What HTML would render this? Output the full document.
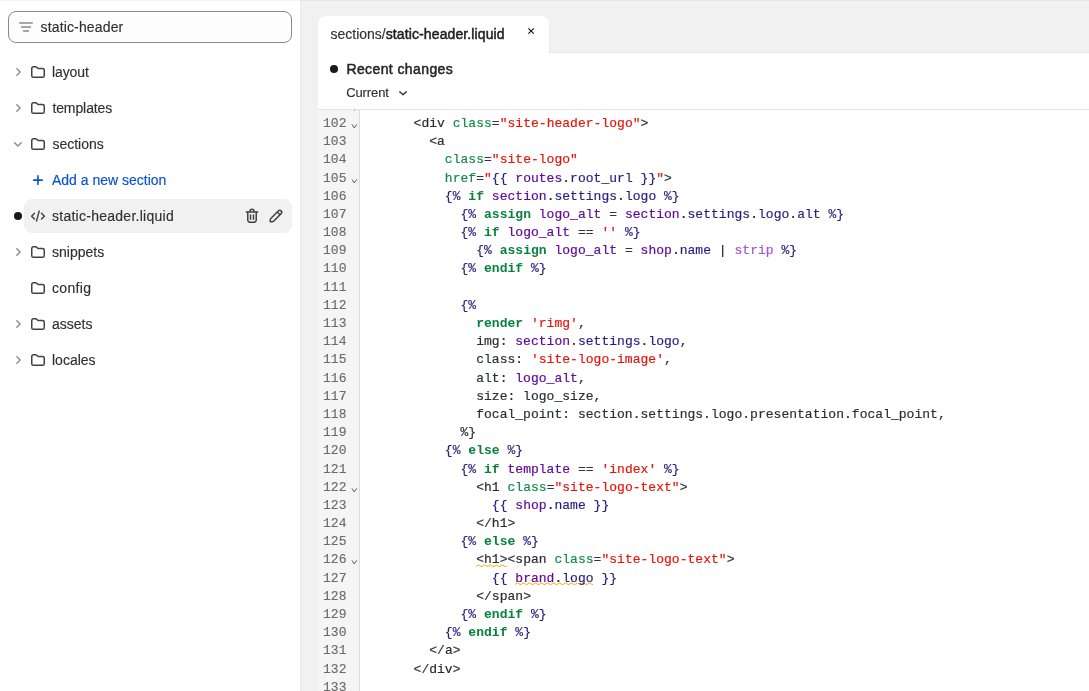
<!DOCTYPE html>
<html>
<head>
<meta charset="utf-8">
<title>Edit code</title>
<style>
html,body{margin:0;padding:0;}
body{will-change:transform;width:1089px;height:691px;overflow:hidden;position:relative;background:#f1f1f1;font-family:"Liberation Sans",sans-serif;color:#303030;}
*{box-sizing:border-box;}
.abs{position:absolute;}
#topline{left:0;top:0;width:1089px;height:1px;background:linear-gradient(to right,#f4f4f4 0,#f4f4f4 300px,#e5e5e5 300px);z-index:5;}
#vline{left:300px;top:0;width:1px;height:691px;background:#ebebeb;}
#side{left:0;top:0;width:300px;height:691px;background:#fff;}
#search{left:8px;top:11px;width:284px;height:32px;border:1px solid #8a8a8a;border-radius:8px;background:#fdfdfd;}
.t{position:absolute;white-space:nowrap;font-size:14px;line-height:20px;color:#303030;-webkit-text-stroke:0.15px;}
.t b,.nb{-webkit-text-stroke:0;}
.row{left:52px;}
svg{position:absolute;overflow:visible;}
#sel{left:24px;top:199px;width:268px;height:34px;border-radius:8px;background:#f1f1f1;}
.dot{width:8px;height:8px;border-radius:50%;background:#1a1a1a;}
#tab{left:318px;top:16px;width:231px;height:40px;background:#fff;border-radius:8px 8px 0 0;}
#tabr{left:549px;top:24px;width:1px;height:29px;background:#ebebeb;}
#tabb{left:549px;top:52px;width:540px;height:1px;background:#ebebeb;}
#panel{left:318px;top:53px;width:771px;height:638px;background:#fff;}
#sep{left:318px;top:109px;width:771px;height:1px;background:#e3e3e3;}
#gutter{left:318px;top:110px;width:42px;height:581px;background:#f5f5f5;border-right:1px solid #ddd;}
pre{margin:0;position:absolute;font-family:"Liberation Mono",monospace;font-size:13px;line-height:18.1875px;white-space:pre;}
#nums{-webkit-text-stroke:0.15px;left:318px;top:114.9375px;width:31.5px;text-align:right;padding-right:3px;color:#6c6c6c;letter-spacing:0.02px;}
#code{-webkit-text-stroke:0.18px;left:366.6px;top:114.9375px;color:#2a2e35;letter-spacing:0.025px;}
.b{color:#2c3845;}
.n{color:#2a2a2a;}
.a{color:#148a47;}
.s{color:#e8140a;}
.l{color:#271f80;}
.k{color:#07823e;font-weight:bold;-webkit-text-stroke:0;}
.v{color:#620b99;}
.p{color:#271f80;}
.d{color:#222;}
.f{color:#a453d6;}
</style>
</head>
<body>
<div id="side" class="abs">
  <div id="search" class="abs"></div>
  <svg style="left:16px;top:17px" width="20" height="20" viewBox="0 0 20 20" fill="#8a8a8a"><path d="M3 6a.75.75 0 0 1 .75-.75h12.5a.75.75 0 0 1 0 1.5h-12.5a.75.75 0 0 1-.75-.75Z"/><path d="M6.75 14a.75.75 0 0 1 .75-.75h5a.75.75 0 0 1 0 1.5h-5a.75.75 0 0 1-.75-.75Z"/><path d="M5.5 9.25a.75.75 0 0 0 0 1.5h9a.75.75 0 0 0 0-1.5h-9Z"/></svg>
  <div class="t" style="left:40.5px;top:17px;letter-spacing:0.15px;">static-header</div>

  <div id="sel" class="abs"></div>

  <!-- chevrons -->
  <svg class="chev" style="left:10px;top:64px" width="16" height="16" viewBox="0 0 16 16"><path d="M6.8 4.7 L10.1 8 L6.8 11.3" fill="none" stroke="#8a8a8a" stroke-width="1.4" stroke-linecap="round" stroke-linejoin="round"/></svg>
  <svg class="chev" style="left:10px;top:100px" width="16" height="16" viewBox="0 0 16 16"><path d="M6.8 4.7 L10.1 8 L6.8 11.3" fill="none" stroke="#8a8a8a" stroke-width="1.4" stroke-linecap="round" stroke-linejoin="round"/></svg>
  <svg class="chev" style="left:10px;top:136px" width="16" height="16" viewBox="0 0 16 16"><path d="M4.6 6.7 L7.9 10 L11.2 6.7" fill="none" stroke="#8a8a8a" stroke-width="1.4" stroke-linecap="round" stroke-linejoin="round"/></svg>
  <svg class="chev" style="left:10px;top:244px" width="16" height="16" viewBox="0 0 16 16"><path d="M6.8 4.7 L10.1 8 L6.8 11.3" fill="none" stroke="#8a8a8a" stroke-width="1.4" stroke-linecap="round" stroke-linejoin="round"/></svg>
  <svg class="chev" style="left:10px;top:316px" width="16" height="16" viewBox="0 0 16 16"><path d="M6.8 4.7 L10.1 8 L6.8 11.3" fill="none" stroke="#8a8a8a" stroke-width="1.4" stroke-linecap="round" stroke-linejoin="round"/></svg>
  <svg class="chev" style="left:10px;top:352px" width="16" height="16" viewBox="0 0 16 16"><path d="M6.8 4.7 L10.1 8 L6.8 11.3" fill="none" stroke="#8a8a8a" stroke-width="1.4" stroke-linecap="round" stroke-linejoin="round"/></svg>

  <!-- folders -->
  <svg style="left:28px;top:62px" width="20" height="20" viewBox="0 0 20 20"><path d="M3.75 6.4a1.65 1.65 0 0 1 1.65-1.65h2.3a1.4 1.4 0 0 1 1 .41l1.05 1.05a.6.6 0 0 0 .42.17h4.43a1.65 1.65 0 0 1 1.65 1.65v5.6a1.65 1.65 0 0 1-1.65 1.65h-9.2a1.65 1.65 0 0 1-1.65-1.65Z" fill="none" stroke="#414141" stroke-width="1.5" stroke-linejoin="round"/></svg>
  <svg style="left:28px;top:98px" width="20" height="20" viewBox="0 0 20 20"><path d="M3.75 6.4a1.65 1.65 0 0 1 1.65-1.65h2.3a1.4 1.4 0 0 1 1 .41l1.05 1.05a.6.6 0 0 0 .42.17h4.43a1.65 1.65 0 0 1 1.65 1.65v5.6a1.65 1.65 0 0 1-1.65 1.65h-9.2a1.65 1.65 0 0 1-1.65-1.65Z" fill="none" stroke="#414141" stroke-width="1.5" stroke-linejoin="round"/></svg>
  <svg style="left:28px;top:134px" width="20" height="20" viewBox="0 0 20 20"><path d="M3.75 6.4a1.65 1.65 0 0 1 1.65-1.65h2.3a1.4 1.4 0 0 1 1 .41l1.05 1.05a.6.6 0 0 0 .42.17h4.43a1.65 1.65 0 0 1 1.65 1.65v5.6a1.65 1.65 0 0 1-1.65 1.65h-9.2a1.65 1.65 0 0 1-1.65-1.65Z" fill="none" stroke="#414141" stroke-width="1.5" stroke-linejoin="round"/></svg>
  <svg style="left:28px;top:242px" width="20" height="20" viewBox="0 0 20 20"><path d="M3.75 6.4a1.65 1.65 0 0 1 1.65-1.65h2.3a1.4 1.4 0 0 1 1 .41l1.05 1.05a.6.6 0 0 0 .42.17h4.43a1.65 1.65 0 0 1 1.65 1.65v5.6a1.65 1.65 0 0 1-1.65 1.65h-9.2a1.65 1.65 0 0 1-1.65-1.65Z" fill="none" stroke="#414141" stroke-width="1.5" stroke-linejoin="round"/></svg>
  <svg style="left:28px;top:278px" width="20" height="20" viewBox="0 0 20 20"><path d="M3.75 6.4a1.65 1.65 0 0 1 1.65-1.65h2.3a1.4 1.4 0 0 1 1 .41l1.05 1.05a.6.6 0 0 0 .42.17h4.43a1.65 1.65 0 0 1 1.65 1.65v5.6a1.65 1.65 0 0 1-1.65 1.65h-9.2a1.65 1.65 0 0 1-1.65-1.65Z" fill="none" stroke="#414141" stroke-width="1.5" stroke-linejoin="round"/></svg>
  <svg style="left:28px;top:314px" width="20" height="20" viewBox="0 0 20 20"><path d="M3.75 6.4a1.65 1.65 0 0 1 1.65-1.65h2.3a1.4 1.4 0 0 1 1 .41l1.05 1.05a.6.6 0 0 0 .42.17h4.43a1.65 1.65 0 0 1 1.65 1.65v5.6a1.65 1.65 0 0 1-1.65 1.65h-9.2a1.65 1.65 0 0 1-1.65-1.65Z" fill="none" stroke="#414141" stroke-width="1.5" stroke-linejoin="round"/></svg>
  <svg style="left:28px;top:350px" width="20" height="20" viewBox="0 0 20 20"><path d="M3.75 6.4a1.65 1.65 0 0 1 1.65-1.65h2.3a1.4 1.4 0 0 1 1 .41l1.05 1.05a.6.6 0 0 0 .42.17h4.43a1.65 1.65 0 0 1 1.65 1.65v5.6a1.65 1.65 0 0 1-1.65 1.65h-9.2a1.65 1.65 0 0 1-1.65-1.65Z" fill="none" stroke="#414141" stroke-width="1.5" stroke-linejoin="round"/></svg>

  <div class="t row" style="top:62px;letter-spacing:-0.1px;">layout</div>
  <div class="t row" style="top:98px;left:52.4px;letter-spacing:-0.1px;">templates</div>
  <div class="t row" style="top:134px;left:52.4px;">sections</div>
  <svg style="left:28px;top:170px" width="20" height="20" viewBox="0 0 20 20"><path d="M9.95 5.75v8.7M5.6 10.1h8.7" fill="none" stroke="#0b50d6" stroke-width="1.6" stroke-linecap="round"/></svg>
  <div class="t row" style="top:170px;color:#0b50d6;">Add a new section</div>

  <div class="dot abs" style="left:14px;top:212px;"></div>
  <svg style="left:28px;top:206px" width="20" height="20" viewBox="0 0 20 20"><path d="M6.5 7.3 L3.6 10.2 L6.5 13.1 M11.2 5 L8.5 15.1 M13.5 7.3 L16.4 10.2 L13.5 13.1" fill="none" stroke="#414141" stroke-width="1.4" stroke-linecap="round" stroke-linejoin="round"/></svg>
  <div class="t row" style="top:206px;letter-spacing:0.26px;">static-header.liquid</div>
  <svg style="left:242px;top:206px" width="20" height="20" viewBox="0 0 20 20" fill="#414141"><path d="M11.5 8.25a.75.75 0 0 1 .75.75v4.25a.75.75 0 0 1-1.5 0v-4.25a.75.75 0 0 1 .75-.75Z"/><path d="M9.25 9a.75.75 0 0 0-1.5 0v4.25a.75.75 0 0 0 1.5 0v-4.25Z"/><path fill-rule="evenodd" d="M7.25 5.25a2.75 2.75 0 0 1 5.5 0h3a.75.75 0 0 1 0 1.5h-.75v5.45c0 1.68 0 2.52-.327 3.162a3 3 0 0 1-1.311 1.311c-.642.327-1.482.327-3.162.327h-.4c-1.68 0-2.52 0-3.162-.327a3 3 0 0 1-1.311-1.311c-.327-.642-.327-1.482-.327-3.162v-5.45h-.75a.75.75 0 0 1 0-1.5h3Zm1.5 0a1.25 1.25 0 1 1 2.5 0h-2.5Zm-2.25 1.5h7v5.45c0 .865-.001 1.423-.036 1.848-.033.408-.09.559-.128.633a1.5 1.5 0 0 1-.655.655c-.074.038-.225.095-.633.128-.425.035-.983.036-1.848.036h-.4c-.865 0-1.423-.001-1.848-.036-.408-.033-.559-.09-.633-.128a1.5 1.5 0 0 1-.656-.655c-.037-.074-.094-.225-.127-.633-.035-.425-.036-.983-.036-1.848v-5.45Z"/></svg>
  <svg style="left:266px;top:206px" width="20" height="20" viewBox="0 0 20 20" fill="#414141"><path fill-rule="evenodd" d="M15.655 4.344a2.695 2.695 0 0 0-3.81 0l-.599.599-.009-.009-1.06 1.06.008.01-5.88 5.88a2.750 2.750 0 0 0-.805 1.944v1.922a.75.75 0 0 0 .75.75h1.922a2.750 2.750 0 0 0 1.944-.806l7.54-7.539a2.695 2.695 0 0 0 0-3.810Zm-4.409 2.720-5.880 5.880a1.250 1.250 0 0 0-.366.884v1.172h1.172c.331 0 .650-.132.883-.366l5.880-5.880-1.689-1.690Zm2.750.629.599-.599a1.195 1.195 0 1 0-1.690-1.689l-.598.599 1.690 1.689Z"/></svg>

  <div class="t row" style="top:242px;">snippets</div>
  <div class="t row" style="top:278px;letter-spacing:0.35px;">config</div>
  <div class="t row" style="top:314px;">assets</div>
  <div class="t row" style="top:350px;">locales</div>
</div>

<div id="tab" class="abs"></div>
<div id="panel" class="abs"></div>
<div id="tabr" class="abs"></div><div id="tabb" class="abs"></div>
<div class="t" style="left:330.5px;top:24px;">sections/<span style="letter-spacing:0.11px;color:#1f1f1f;-webkit-text-stroke:0.5px;">static-header.liquid</span></div>
<svg style="left:521px;top:21px" width="20" height="20" viewBox="0 0 20 20"><path d="M7.4 7.3l5.4 5.4M12.8 7.3l-5.4 5.4" fill="none" stroke="#111" stroke-width="1.1"/></svg>

<div class="dot abs" style="left:330px;top:65px;"></div>
<div class="t" style="left:346.4px;top:59px;letter-spacing:0.4px;color:#262626;-webkit-text-stroke:0.5px;">Recent changes</div>
<div class="t" style="left:346.2px;top:83px;font-size:13px;letter-spacing:-0.1px;">Current</div>
<svg style="left:395px;top:85px" width="16" height="16" viewBox="0 0 16 16"><path d="M4.75 6.85 L8.05 9.85 L11.35 6.85" fill="none" stroke="#303030" stroke-width="1.4" stroke-linecap="round" stroke-linejoin="round"/></svg>

<div id="sep" class="abs"></div>
<div id="gutter" class="abs"></div>
<div id="vline" class="abs"></div>
<div id="topline" class="abs"></div>

<svg style="left:0;top:0" width="1089" height="691" viewBox="0 0 1089 691"><g fill="none" stroke="#5a5a5a" stroke-width="1" stroke-linejoin="round"><path d="M351.95 124.4 L354.3 128.0 L356.65 124.4"/><path d="M351.95 179.4 L354.3 183.0 L356.65 179.4"/><path d="M351.95 488.4 L354.3 492.0 L356.65 488.4"/><path d="M351.95 560.4 L354.3 564.0 L356.65 560.4"/></g><rect x="354" y="110" width="1" height="1" fill="#a0a0a0"/>
</svg>
<svg style="left:475.90px;top:563.90px;overflow:hidden" width="31.3" height="3.6" viewBox="0 0 31.3 3.6"><path d="M0 2.5 l2 -1.5 l1 0 l2 1.5 l1 0 l2 -1.5 l1 0 l2 1.5 l1 0 l2 -1.5 l1 0 l2 1.5 l1 0 l2 -1.5 l1 0 l2 1.5 l1 0 l2 -1.5 l1 0 l2 1.5 l1 0 l2 -1.5 l1 0 l2 1.5 l1 0" stroke="#ffa500" fill="none" stroke-width="0.95"/></svg>
<svg style="left:515.00px;top:582.10px;overflow:hidden" width="78.3" height="3.6" viewBox="0 0 78.3 3.6"><path d="M0 2.5 l2 -1.5 l1 0 l2 1.5 l1 0 l2 -1.5 l1 0 l2 1.5 l1 0 l2 -1.5 l1 0 l2 1.5 l1 0 l2 -1.5 l1 0 l2 1.5 l1 0 l2 -1.5 l1 0 l2 1.5 l1 0 l2 -1.5 l1 0 l2 1.5 l1 0 l2 -1.5 l1 0 l2 1.5 l1 0 l2 -1.5 l1 0 l2 1.5 l1 0 l2 -1.5 l1 0 l2 1.5 l1 0 l2 -1.5 l1 0 l2 1.5 l1 0 l2 -1.5 l1 0 l2 1.5 l1 0 l2 -1.5 l1 0 l2 1.5 l1 0 l2 -1.5 l1 0 l2 1.5 l1 0 l2 -1.5 l1 0 l2 1.5 l1 0" stroke="#ffa500" fill="none" stroke-width="0.95"/></svg>
<pre id="nums">102
103
104
105
106
107
108
109
110
111
112
113
114
115
116
117
118
119
120
121
122
123
124
125
126
127
128
129
130
131
132
133</pre>

<pre id="code">      <span class="b">&lt;</span><span class="n">div</span> <span class="a">class</span><span class="b">=</span><span class="s">"site-header-logo"</span><span class="b">&gt;</span>
        <span class="b">&lt;</span><span class="n">a</span>
          <span class="a">class</span><span class="b">=</span><span class="s">"site-logo"</span>
          <span class="a">href</span><span class="b">=</span><span class="s">"</span><span class="l">{{</span> <span class="v">routes</span><span class="d">.</span><span class="p">root_url</span> <span class="l">}}</span><span class="s">"</span><span class="b">&gt;</span>
          <span class="l">{%</span> <span class="k">if</span> <span class="v">section</span><span class="d">.</span><span class="p">settings</span><span class="d">.</span><span class="p">logo</span> <span class="l">%}</span>
            <span class="l">{%</span> <span class="k">assign</span> <span class="v">logo_alt</span> <span class="b">=</span> <span class="v">section</span><span class="d">.</span><span class="p">settings</span><span class="d">.</span><span class="p">logo</span><span class="d">.</span><span class="p">alt</span> <span class="l">%}</span>
            <span class="l">{%</span> <span class="k">if</span> <span class="v">logo_alt</span> <span class="b">==</span> <span class="s">''</span> <span class="l">%}</span>
              <span class="l">{%</span> <span class="k">assign</span> <span class="v">logo_alt</span> <span class="b">=</span> <span class="v">shop</span><span class="d">.</span><span class="p">name</span> <span class="d">|</span> <span class="f">strip</span> <span class="l">%}</span>
            <span class="l">{%</span> <span class="k">endif</span> <span class="l">%}</span>

            <span class="l">{%</span>
              <span class="k">render</span> <span class="s">'rimg'</span>,
              img: <span class="v">section</span><span class="d">.</span><span class="p">settings</span><span class="d">.</span><span class="p">logo</span>,
              class: <span class="s">'site-logo-image'</span>,
              alt: <span class="v">logo_alt</span>,
              size: logo_size,
              focal_point: section.settings.logo.presentation.focal_point,
            %}
          <span class="l">{%</span> <span class="k">else</span> <span class="l">%}</span>
            <span class="l">{%</span> <span class="k">if</span> <span class="v">template</span> <span class="b">==</span> <span class="s">'index'</span> <span class="l">%}</span>
              <span class="b">&lt;</span><span class="n">h1</span> <span class="a">class</span><span class="b">=</span><span class="s">"site-logo-text"</span><span class="b">&gt;</span>
                <span class="l">{{</span> <span class="v">shop</span><span class="d">.</span><span class="p">name</span> <span class="l">}}</span>
              <span class="b">&lt;/</span><span class="n">h1</span><span class="b">&gt;</span>
            <span class="l">{%</span> <span class="k">else</span> <span class="l">%}</span>
              <span class="b">&lt;</span><span class="n">h1</span><span class="b">&gt;</span><span class="b">&lt;</span><span class="n">span</span> <span class="a">class</span><span class="b">=</span><span class="s">"site-logo-text"</span><span class="b">&gt;</span>
                <span class="l">{{</span> <span class="v">brand</span><span class="d">.</span><span class="p">logo</span> <span class="l">}}</span>
              <span class="b">&lt;/</span><span class="n">span</span><span class="b">&gt;</span>
            <span class="l">{%</span> <span class="k">endif</span> <span class="l">%}</span>
          <span class="l">{%</span> <span class="k">endif</span> <span class="l">%}</span>
        <span class="b">&lt;/</span><span class="n">a</span><span class="b">&gt;</span>
      <span class="b">&lt;/</span><span class="n">div</span><span class="b">&gt;</span>
</pre>
</body>
</html>
